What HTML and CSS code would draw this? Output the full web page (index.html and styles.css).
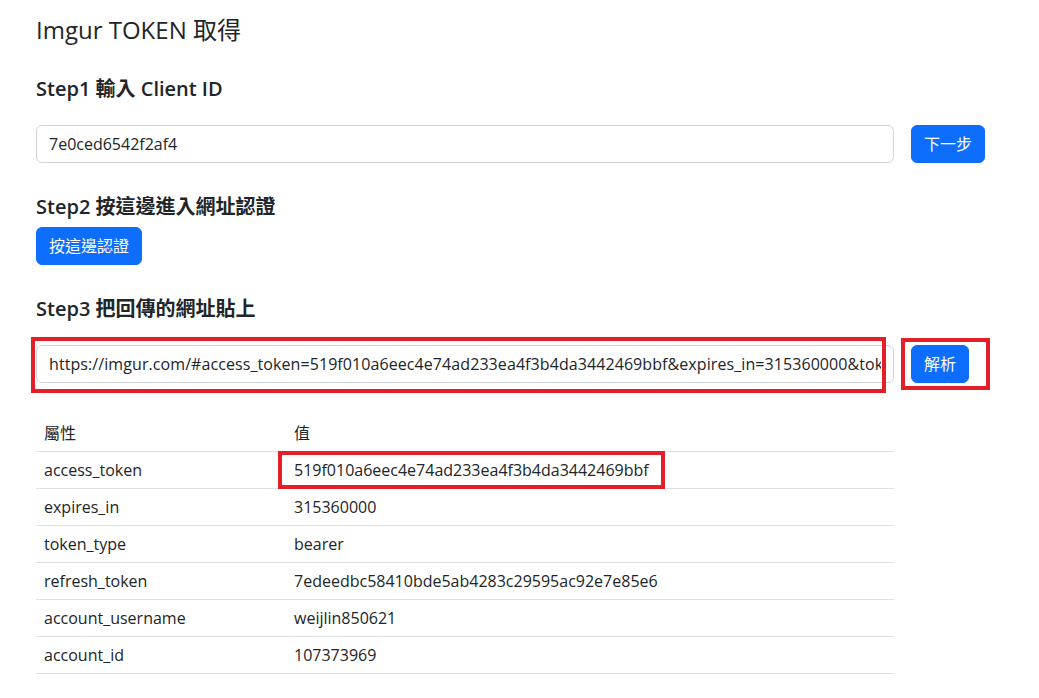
FILE: index.html
```html
<!DOCTYPE html>
<html lang="zh-Hant">
<head>
<meta charset="utf-8">
<title>Imgur TOKEN 取得</title>
<link rel="stylesheet" href="styles.css">
</head>
<body>
<main class="page">
  <h1 class="title">Imgur TOKEN 取得</h1>

  <section class="step">
    <h2 class="step-title">Step1 輸入 Client ID</h2>
    <div class="input-row">
      <input class="field" type="text" value="7e0ced6542f2af4">
      <button class="btn" type="button">下一步</button>
    </div>
  </section>

  <section class="step">
    <h2 class="step-title step-title-tight">Step2 按這邊進入網址認證</h2>
    <button class="btn" type="button">按這邊認證</button>
  </section>

  <section class="step">
    <h2 class="step-title">Step3 把回傳的網址貼上</h2>
    <div class="input-row">
      <input class="field field-url" type="text" value="https://imgur.com/#access_token=519f010a6eec4e74ad233ea4f3b4da3442469bbf&amp;expires_in=315360000&amp;token_type=bearer&amp;refresh_token=7edeedbc58410bde5ab4283c29595ac92e7e85e6">
      <button class="btn" type="button">解析</button>
    </div>
  </section>

  <table class="result">
    <thead>
      <tr><th class="col-key">屬性</th><th class="col-val">值</th></tr>
    </thead>
    <tbody>
      <tr><td>access_token</td><td>519f010a6eec4e74ad233ea4f3b4da3442469bbf</td></tr>
      <tr><td>expires_in</td><td>315360000</td></tr>
      <tr><td>token_type</td><td>bearer</td></tr>
      <tr><td>refresh_token</td><td>7edeedbc58410bde5ab4283c29595ac92e7e85e6</td></tr>
      <tr><td>account_username</td><td>weijlin850621</td></tr>
      <tr><td>account_id</td><td>107373969</td></tr>
    </tbody>
  </table>

  <div class="mark mark-url"></div>
  <div class="mark mark-btn"></div>
  <div class="mark mark-token"></div>
</main>
</body>
</html>
```

FILE: styles.css
```css
* { box-sizing: border-box; }

html, body {
  margin: 0;
  background: #fff;
}

body {
  font-family: "Open Sans", "Noto Sans CJK TC", sans-serif;
  font-size: 16px;
  line-height: 24px;
  color: #212529;
}

.page {
  position: relative;
  padding: 13px 0 0 36px;
  width: 894px;
}

.title {
  margin: 0 0 30px;
  font-size: 24px;
  line-height: 34px;
  font-weight: 400;
}

.step {
  margin-bottom: 32px;
}

.step-title {
  margin: 0 0 24px;
  font-size: 20px;
  line-height: 24px;
  font-weight: 600;
}

.step-title-tight {
  margin-bottom: 8px;
}

.input-row {
  display: flex;
  align-items: flex-start;
  gap: 17px;
  width: 949px;
}

.field {
  width: 858px;
  height: 38px;
  padding: 6px 12px;
  border: 1px solid #ced4da;
  border-radius: 6px;
  font: inherit;
  color: #212529;
  background: #fff;
  outline: none;
}

.field-url {
  letter-spacing: 0.08px;
}

.btn {
  height: 38px;
  padding: 6px 12px;
  border: 1px solid #0d6efd;
  border-radius: 6px;
  background: #0d6efd;
  color: #fff;
  font: inherit;
  cursor: pointer;
  white-space: nowrap;
}

.result {
  width: 858px;
  border-collapse: collapse;
}

.result th,
.result td {
  padding: 6px 8px;
  text-align: left;
  font-weight: 400;
  border-bottom: 1px solid #dee2e6;
  line-height: 24px;
}

.col-key { width: 250px; }

.mark {
  position: absolute;
  border: 4px solid #e51f28;
  pointer-events: none;
}

.mark-url {
  left: 31px;
  top: 337px;
  width: 855px;
  height: 56px;
}

.mark-btn {
  left: 901px;
  top: 338px;
  width: 89px;
  height: 52px;
}

.mark-token {
  left: 278px;
  top: 451px;
  width: 387px;
  height: 38px;
}
```
